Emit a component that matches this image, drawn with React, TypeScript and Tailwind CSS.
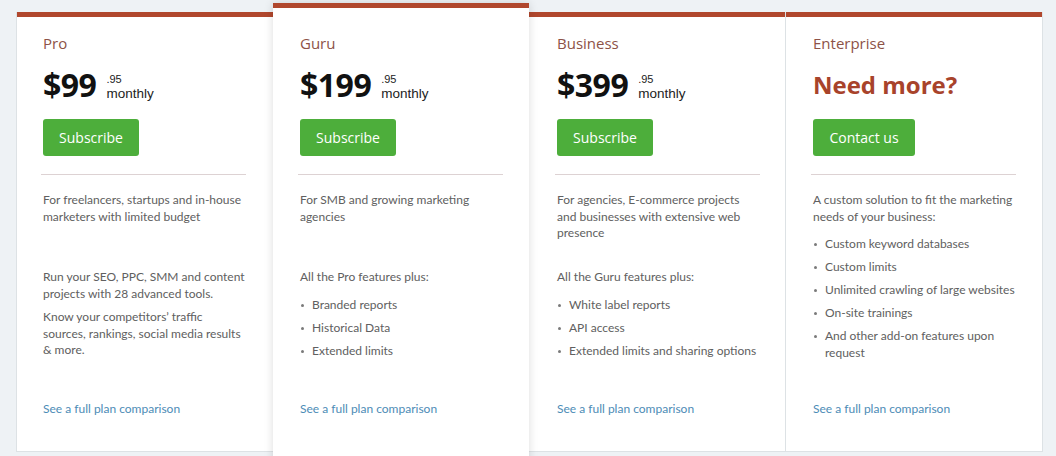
import React from "react";

const body = "font-['Lato',sans-serif] text-[12px] leading-[16.5px] text-[#606060]";

function Bullets({ items }: { items: React.ReactNode[] }) {
  return (
    <ul className="flex flex-col gap-[6.5px]">
      {items.map((it, i) => (
        <li key={i} className="flex items-start">
          <span className="mt-[7px] ml-[1px] h-[3px] w-[3px] shrink-0 rounded-full bg-[#7a7a7a]" />
          <span className="ml-[8px] whitespace-nowrap">{it}</span>
        </li>
      ))}
    </ul>
  );
}

function Price({ amount }: { amount: string }) {
  return (
    <div className="mt-[12px] flex h-[40px] items-start">
      <span className="font-['Open_Sans',sans-serif] text-[32px] font-bold leading-[40px] text-[#111] tracking-[-0.5px]">
        {amount}
      </span>
      <div className="ml-[10px] mt-[8px] flex flex-col font-['Liberation_Sans',sans-serif] text-[#222]">
        <span className="text-[11px] leading-[12.5px]">.95</span>
        <span className="text-[13.5px] leading-[15px]">monthly</span>
      </div>
    </div>
  );
}

function Card({
  title,
  top,
  button,
  btnW,
  children,
  className,
  pl,
  pb,
}: {
  title: string;
  top: React.ReactNode;
  button: string;
  btnW: string;
  children: React.ReactNode;
  className: string;
  pl: string;
  pb: string;
}) {
  return (
    <div className={`flex shrink-0 flex-col bg-white ${className}`}>
      <div className="h-[5px] w-full bg-[#b0472d]" />
      <div className={`flex flex-1 flex-col pt-[16px] ${pl} ${pb}`}>
        <div className="font-['Open_Sans',sans-serif] text-[15px] leading-[20px] text-[#8d5247]">{title}</div>
        {top}
        <div
          className={`mt-[14px] flex h-[37px] ${btnW} items-center justify-center rounded-[3px] bg-[#4dae3b] font-['Open_Sans',sans-serif] text-[14px] text-white`}
        >
          {button}
        </div>
        <div className="-ml-[2px] mt-[18px] h-[1px] w-[205px] bg-[#ddd2d3]" />
        <div className={`mt-[17px] ${body}`}>{children}</div>
        <div className="mt-auto font-['Lato',sans-serif] text-[12px] leading-[16.5px] text-[#4d8cb6]">
          See a full plan comparison
        </div>
      </div>
    </div>
  );
}

export default function App() {
  return (
    <div className="flex h-[456px] w-[1056px] items-start overflow-hidden bg-[#eef2f5] pl-[16px] pt-[12px]">
      <Card
        title="Pro"
        top={<Price amount="$99" />}
        button="Subscribe"
        btnW="w-[96px]"
        className="h-[440px] w-[257px] border-b border-l border-[#dde2e5]"
        pl="pl-[26px]"
        pb="pb-[34px]"
      >
        <div className="h-[77px]">
          For freelancers, startups and in-house
          <br />
          marketers with limited budget
        </div>
        <div>
          Run your SEO, PPC, SMM and content
          <br />
          projects with 28 advanced tools.
        </div>
        <div className="mt-[7px]">
          Know your competitors’ traffic
          <br />
          sources, rankings, social media results
          <br />
          &amp; more.
        </div>
      </Card>
      <Card
        title="Guru"
        top={<Price amount="$199" />}
        button="Subscribe"
        btnW="w-[96px]"
        className="relative z-10 -mt-[9px] h-[470px] w-[256px] shadow-[0_0_9px_rgba(0,0,0,0.14)]"
        pl="pl-[27px] pt-[25px]"
        pb="pb-[56px]"
      >
        <div className="h-[77px]">
          For SMB and growing marketing
          <br />
          agencies
        </div>
        <div>All the Pro features plus:</div>
        <div className="mt-[11.5px]">
          <Bullets items={["Branded reports", "Historical Data", "Extended limits"]} />
        </div>
      </Card>
      <Card
        title="Business"
        top={<Price amount="$399" />}
        button="Subscribe"
        btnW="w-[96px]"
        className="h-[440px] w-[257px] border-b border-r border-[#dde2e5]"
        pl="pl-[28px]"
        pb="pb-[34px]"
      >
        <div className="h-[77px]">
          For agencies, E-commerce projects
          <br />
          and businesses with extensive web
          <br />
          presence
        </div>
        <div>All the Guru features plus:</div>
        <div className="mt-[11.5px]">
          <Bullets items={["White label reports", "API access", "Extended limits and sharing options"]} />
        </div>
      </Card>
      <Card
        title="Enterprise"
        top={
          <div className="mt-[12px] h-[40px] font-['Open_Sans',sans-serif] text-[24px] font-bold leading-[40px] text-[#a8432b]">
            Need more?
          </div>
        }
        button="Contact us"
        btnW="w-[102px]"
        className="h-[440px] w-[257px] border-b border-r border-[#dde2e5]"
        pl="pl-[27px]"
        pb="pb-[34px]"
      >
        <div>
          A custom solution to fit the marketing
          <br />
          needs of your business:
        </div>
        <div className="mt-[11px]">
          <Bullets
            items={[
              "Custom keyword databases",
              "Custom limits",
              "Unlimited crawling of large websites",
              "On-site trainings",
              <>
                And other add-on features upon
                <br />
                request
              </>,
            ]}
          />
        </div>
      </Card>
    </div>
  );
}
